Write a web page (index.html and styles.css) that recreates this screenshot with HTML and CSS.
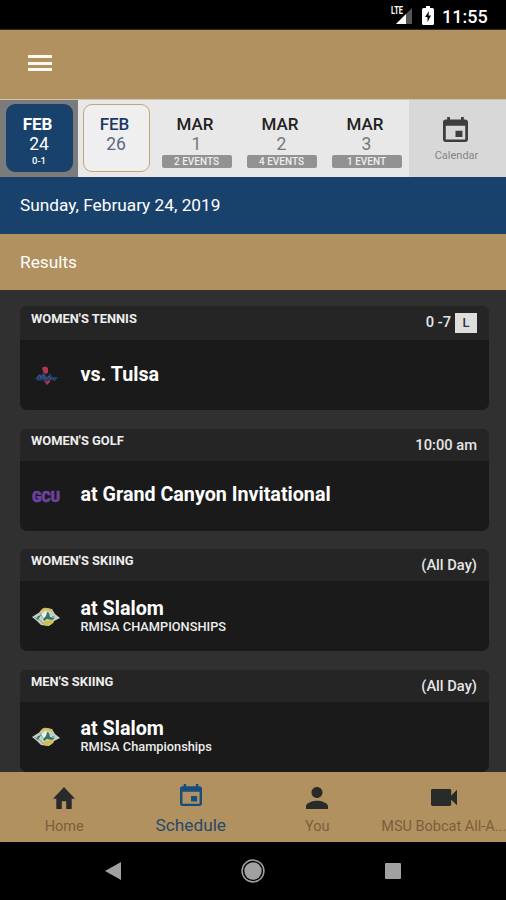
FILE: index.html
```html
<!DOCTYPE html>
<html lang="en">
<head>
  <meta charset="UTF-8">
  <meta name="viewport" content="width=device-width, initial-scale=1.0">
  <title>Schedule</title>
  <link rel="stylesheet" href="styles.css">
</head>
<body>
  <svg class="symbols" width="0" height="0">
    <symbol id="icon-event" viewBox="3 1 18 20" preserveAspectRatio="none">
      <path d="M17 12h-5v5h5v-5zM16 1v2H8V1H6v2H5c-1.11 0-1.99.9-1.99 2L3 19c0 1.1.89 2 2 2h14c1.1 0 2-.9 2-2V5c0-1.1-.9-2-2-2h-1V1h-2zm3 18H5V8h14v11z"/>
    </symbol>
    <symbol id="logo-ski" viewBox="0 0 30 22">
      <path fill="#c6d2c9" d="M1 11 9 6l5-4 7 1 3 5 5 4-6 3-5 5-8-1-4-4z"/>
      <path fill="#d7bd4d" d="M8 7Q11 1 16 2q5 0 7 6l-4-3-5-1zM11 17l4-2 6-1 2 2q-4 5-10 3z"/>
      <path fill="#edf0e6" d="m11 8 4-3 3 4-3 5-4-2z"/>
      <path fill="#327663" d="m16 6 2 1 1 4 5 1-3 2-5-1-3 2-1-2 3-3zM7 10l3-1-3 5-2-1z"/>
      <path fill="none" stroke="#769189" stroke-width=".8" d="m3 11 6 3 3 4M9 7l3 5M24 10l-3 1"/>
    </symbol>
  </svg>

  <div class="status-bar">
    <svg class="signal" width="24" height="19" viewBox="0 0 24 19">
      <path fill="#555" d="M21 2v16H5z"/>
      <path fill="#fff" d="M15 8v10H5z"/>
      <text x="0" y="8" textLength="12" lengthAdjust="spacingAndGlyphs">LTE</text>
    </svg>
    <svg class="battery" width="12" height="19" viewBox="0 0 12 19">
      <path fill="#fff" d="M4 0h4v2h2.500q1.500 0 1.500 1.500v14Q12 19 10.500 19h-9Q0 19 0 17.500v-14Q0 2 1.500 2H4z"/>
      <path fill="#000" d="M7 5 3 11h2.500v5L9 9.500H6.500z"/>
    </svg>
    <span class="clock">11:55</span>
  </div>

  <header>
    <div class="menu"><span></span><span></span><span></span></div>
  </header>

  <div class="dates">
    <div class="date today">
      <div class="date-box"><b>FEB</b><span>24</span><small>0-1</small></div>
    </div>
    <div class="date next">
      <div class="date-box"><b>FEB</b><span>26</span></div>
    </div>
    <div class="date"><b>MAR</b><span>1</span><em>2 EVENTS</em></div>
    <div class="date"><b>MAR</b><span>2</span><em>4 EVENTS</em></div>
    <div class="date"><b>MAR</b><span>3</span><em>1 EVENT</em></div>
    <div class="calendar">
      <svg width="25" height="25"><use href="#icon-event"/></svg>
      <span>Calendar</span>
    </div>
  </div>

  <div class="day-title">Sunday, February 24, 2019</div>
  <div class="section-title">Results</div>

  <main>
    <div class="card first">
      <div class="card-header">
        <h3>WOMEN'S TENNIS</h3>
        <span class="score">0 -7 <i>L</i></span>
      </div>
      <div class="card-body">
        <svg class="logo" width="30" height="22" viewBox="0 0 30 22">
          <path fill="#b73450" d="M11 3q3-3 6 0v5l-4 1zM14 13h5v4l-3 3-3-4z"/>
          <path fill="#263f68" d="m3 15 5-6 2 1 3-3 3 6 3-5 2 4 6 0-3 4-5-1-4 2-4-2-4 1-2-2z"/>
          <path fill="none" stroke="#436087" stroke-width=".8" d="m6 13 3-3 1 3 3-3 1 4 4-3 2 3"/>
        </svg>
        <div class="event"><h2>vs. Tulsa</h2></div>
      </div>
    </div>

    <div class="card">
      <div class="card-header">
        <h3>WOMEN'S GOLF</h3>
        <span class="time">10:00 am</span>
      </div>
      <div class="card-body">
        <svg class="logo gcu" width="30" height="22" viewBox="0 0 30 22">
          <text x="1" y="16.500" textLength="28" lengthAdjust="spacingAndGlyphs">GCU</text>
        </svg>
        <div class="event"><h2>at Grand Canyon Invitational</h2></div>
      </div>
    </div>

    <div class="card">
      <div class="card-header">
        <h3>WOMEN'S SKIING</h3>
        <span class="time">(All Day)</span>
      </div>
      <div class="card-body">
        <svg class="logo" width="30" height="22"><use href="#logo-ski"/></svg>
        <div class="event"><h2>at Slalom</h2><p>RMISA CHAMPIONSHIPS</p></div>
      </div>
    </div>

    <div class="card">
      <div class="card-header">
        <h3>MEN'S SKIING</h3>
        <span class="time">(All Day)</span>
      </div>
      <div class="card-body">
        <svg class="logo" width="30" height="22"><use href="#logo-ski"/></svg>
        <div class="event"><h2>at Slalom</h2><p>RMISA Championships</p></div>
      </div>
    </div>
  </main>

  <nav>
    <div class="tab">
      <svg width="22" height="22" viewBox="2 3 20 17" preserveAspectRatio="none"><path d="M10 20v-6h4v6h5v-8h3L12 3 2 12h3v8z"/></svg>
      <span>Home</span>
    </div>
    <div class="tab active">
      <svg width="22" height="22"><use href="#icon-event"/></svg>
      <span>Schedule</span>
    </div>
    <div class="tab">
      <svg width="22" height="22" viewBox="4 4 16 16"><path d="M12 12c2.210 0 4-1.790 4-4s-1.790-4-4-4-4 1.790-4 4 1.790 4 4 4zm0 2c-2.670 0-8 1.340-8 4v2h16v-2c0-2.660-5.330-4-8-4z"/></svg>
      <span>You</span>
    </div>
    <div class="tab">
      <svg class="video" width="26" height="17" viewBox="3 6 18 12" preserveAspectRatio="none"><path d="M17 10.500V7c0-.55-.45-1-1-1H4c-.55 0-1 .45-1 1v10c0 .55.45 1 1 1h12c.55 0 1-.45 1-1v-3.500l4 4v-11l-4 4z"/></svg>
      <span>MSU Bobcat All-A...</span>
    </div>
  </nav>

  <div class="system-bar">
    <svg width="16" height="18" viewBox="0 0 16 18"><path d="M16 0v18L0 9z"/></svg>
    <svg width="24" height="24" viewBox="0 0 24 24">
      <circle cx="12" cy="12" r="8.700"/>
      <circle class="ring" cx="12" cy="12" r="10.900"/>
    </svg>
    <svg width="16" height="16" viewBox="0 0 16 16"><rect width="16" height="16" rx="1"/></svg>
  </div>
</body>
</html>
```
FILE: styles.css
```css
* {
  box-sizing: border-box;
}
body {
  font-family: Roboto, sans-serif;
  background-color: #303030;
  color: white;
  margin: 0;
  height: 900px;
  overflow: hidden;
  display: flex;
  flex-direction: column;
}
h2, h3, p {
  margin: 0;
}
svg {
  display: block;
  flex: none;
}
.symbols {
  position: absolute;
}
.status-bar {
  height: 30px;
  flex: none;
  background-color: #000;
  border-bottom: 1px solid #382c1b;
  display: flex;
  align-items: flex-start;
  padding: 6px 18px 0 391px;
}
.signal text {
  font-size: 10px;
  font-weight: bold;
  fill: white;
}
.battery {
  margin-left: 7px;
}
.clock {
  margin-left: 8px;
  font-size: 18px;
  font-weight: 500;
  line-height: 21px;
}
header {
  height: 69px;
  flex: none;
  background-color: #b1915f;
  padding: 25px 28px;
}
.menu {
  width: 24px;
  display: flex;
  flex-direction: column;
  gap: 3.500px;
}
.menu span {
  height: 3px;
  background-color: #fffaf0;
}
.dates {
  height: 78px;
  flex: none;
  display: flex;
  background-color: #e8e8e8;
  border-top: 1px solid #c9c5b8;
}
.date {
  width: 85px;
  padding-top: 14px;
  display: flex;
  flex-direction: column;
  align-items: center;
  color: #777;
}
.date b {
  font-size: 17px;
  line-height: 20px;
  font-weight: 500;
  color: #222;
  margin-right: 3px;
}
.date span {
  font-size: 17.500px;
  line-height: 20px;
}
.date em {
  width: 70px;
  height: 13px;
  margin-top: 1px;
  background-color: #929292;
  border-radius: 2px;
  color: #eee;
  font-size: 10px;
  line-height: 13px;
  font-style: normal;
  font-weight: 500;
  text-align: center;
}
.date.today {
  width: 78px;
  background-color: #7b7b7b;
  padding: 4px 5px 5px 6px;
  align-items: stretch;
}
.date.next {
  width: 76px;
  padding: 4px 4px 5px 5px;
  align-items: stretch;
}
.date-box {
  height: 69px;
  border-radius: 9px;
  padding: 10px 1px 0 0;
  display: flex;
  flex-direction: column;
  align-items: center;
}
.today .date-box {
  background-color: #18426c;
  color: #fff;
}
.today b {
  color: #fff;
  font-weight: 700;
}
.today small {
  font-size: 9.500px;
  line-height: 13px;
  font-weight: 500;
}
.next .date-box {
  background-color: #efefef;
  border: 1px solid #bfa677;
  padding-top: 9px;
}
.next b {
  color: #1b3765;
}
.next span {
  color: #596985;
}
.calendar {
  flex: 1;
  background-color: #d8d8d8;
  display: flex;
  flex-direction: column;
  align-items: center;
  padding: 17px 2px 0 0;
  font-size: 11px;
  line-height: 16px;
  color: #858585;
}
.calendar svg {
  fill: #3e3e3e;
  margin: 0 2px 6px 0;
}
.day-title, .section-title {
  flex: none;
  padding-left: 20px;
  font-size: 17.250px;
  line-height: 56px;
}
.day-title {
  height: 57px;
  background-color: #18426c;
}
.section-title {
  height: 56px;
  background-color: #b1915f;
}
main {
  height: 482px;
  flex: none;
  padding: 16px 17px 0 20px;
  display: flex;
  flex-direction: column;
  gap: 18.500px;
}
.card {
  height: 102px;
  flex: none;
  background-color: #1a1a1a;
  border-radius: 7px;
  overflow: hidden;
}
.card.first {
  height: 104px;
}
.card-header {
  height: 32px;
  background-color: #252525;
  display: flex;
  justify-content: space-between;
  padding: 3px 12px 0 11px;
}
.first .card-header {
  height: 34px;
  padding-top: 4px;
}
.card h3 {
  font-size: 12.900px;
  line-height: 17px;
  font-weight: 700;
  color: #ededed;
}
.time, .score {
  font-size: 14.700px;
  line-height: 26px;
  font-weight: 500;
  color: #e5e5e5;
}
.score {
  line-height: 25px;
  display: flex;
  gap: 4px;
}
.score i {
  width: 22px;
  height: 20px;
  margin-top: 3px;
  background-color: #dedede;
  color: #333;
  font-size: 13px;
  line-height: 20px;
  font-style: normal;
  text-align: center;
}
.card-body {
  height: 69px;
  display: flex;
  align-items: center;
  padding: 0 11px;
}
.logo {
  margin-top: 2px;
}
.gcu text {
  font-size: 14.500px;
  font-weight: 900;
  fill: #6d43a0;
  stroke: #6d43a0;
  stroke-width: .6px;
}
.event {
  margin-left: 19.500px;
}
.event h2 {
  font-size: 19.700px;
  line-height: 22px;
  font-weight: 700;
}
.event p {
  font-size: 12.800px;
  line-height: 14px;
  font-weight: 500;
  color: #ededed;
}
nav {
  height: 70px;
  flex: none;
  background-color: #b1915f;
  display: flex;
  padding-left: 1px;
}
.tab {
  width: 126.500px;
  flex: none;
  display: flex;
  flex-direction: column;
  align-items: center;
  color: #795f3d;
  font-size: 14.500px;
  line-height: 18px;
}
.tab svg {
  margin: 15px 0 9px;
  fill: #292b2b;
}
.tab .video {
  margin: 17px 0 12px;
}
.tab span {
  white-space: nowrap;
}
.tab.active {
  color: #28486c;
  font-size: 17.250px;
}
.tab.active svg {
  margin: 12px 0 10px;
  fill: #174c7d;
}
.system-bar {
  height: 58px;
  flex: none;
  background-color: #000;
  display: flex;
  align-items: center;
  justify-content: space-between;
  padding: 0 105px;
}
.system-bar svg {
  fill: #a1a1a1;
}
.system-bar .ring {
  fill: none;
  stroke: #a1a1a1;
  stroke-width: 1.500px;
}
```
